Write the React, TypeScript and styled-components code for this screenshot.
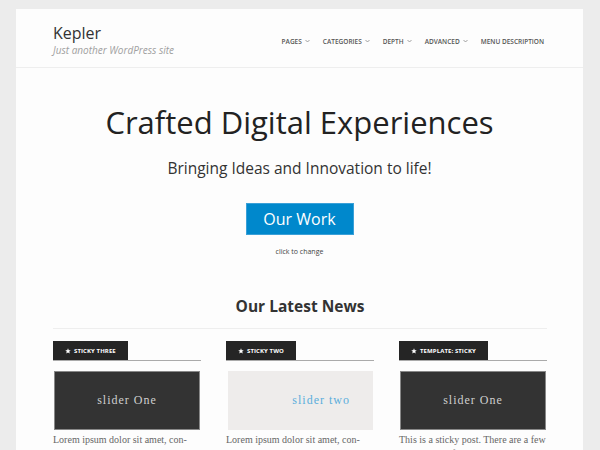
import React from "react";
import styled, { createGlobalStyle } from "styled-components";

const Global = createGlobalStyle`
  html, body { margin: 0; padding: 0; background: #ececec; }
  body { font-family: "Open Sans", sans-serif; }
`;

const Page = styled.div`
  padding: 9px 17px 0 16px;
`;

const Container = styled.div`
  background: #fdfdfd;
  width: 567px;
  min-height: 441px;
`;

const Header = styled.header`
  display: flex;
  justify-content: space-between;
  align-items: center;
  height: 58px;
  padding: 0 39px 0 37px;
  border-bottom: 1px solid #eeeeee;
`;

const Brand = styled.div`
  display: flex;
  flex-direction: column;
  margin-top: 4px;
`;

const SiteTitle = styled.div`
  font-size: 16px;
  color: #333;
  line-height: 20px;
`;

const Tagline = styled.div`
  font-size: 10px;
  font-style: italic;
  color: #a0a0a0;
  line-height: 14px;
`;

const Nav = styled.nav`
  display: flex;
  gap: 13px;
  margin-top: 6px;
`;

const NavItem = styled.span`
  font-size: 6.5px;
  font-weight: 600;
  color: #555;
  text-transform: uppercase;
  display: flex;
  align-items: center;
  gap: 3px;
`;

const Caret = () => (
  <svg width="5" height="4" viewBox="0 0 5 4">
    <path d="M0.5 1 L2.5 3 L4.5 1" fill="none" stroke="#888" strokeWidth="0.8" />
  </svg>
);

const Hero = styled.section`
  display: flex;
  flex-direction: column;
  align-items: center;
  padding-top: 32px;
`;

const HeroTitle = styled.h1`
  margin: 0;
  font-size: 31px;
  font-weight: 400;
  color: #222;
  line-height: 44px;
`;

const HeroSub = styled.p`
  margin: 12px 0 0;
  font-size: 15.5px;
  color: #333;
  line-height: 24px;
`;

const Button = styled.div`
  margin-top: 23px;
  width: 108px;
  height: 32px;
  background: #0088cc;
  border: 1px solid #3aa0d8;
  box-sizing: border-box;
  color: #fff;
  font-size: 16px;
  display: flex;
  align-items: center;
  justify-content: center;
`;

const Small = styled.div`
  margin-top: 12px;
  font-size: 7px;
  color: #444;
`;

const News = styled.section`
  padding: 0 36px 0 37px;
  margin-top: 38px;
`;

const NewsTitle = styled.h2`
  margin: 0;
  text-align: center;
  font-size: 15.5px;
  font-weight: 700;
  color: #333;
  line-height: 24px;
  padding-bottom: 10px;
  border-bottom: 1px solid #eeeeee;
`;

const Grid = styled.div`
  display: grid;
  grid-template-columns: repeat(3, 148px);
  column-gap: 25px;
  margin-top: 12px;
`;

const Card = styled.article`
  display: flex;
  flex-direction: column;
`;

const TagRow = styled.div`
  display: flex;
  border-bottom: 1px solid #aaa;
`;

const Tag = styled.div`
  background: #252525;
  color: #fff;
  font-size: 6px;
  font-weight: 700;
  height: 19px;
  padding: 0 12px;
  display: flex;
  align-items: center;
  gap: 3px;
  text-transform: uppercase;
  letter-spacing: 0.1px;
`;

const Slide = styled.div<{ $light?: boolean }>`
  margin: 10px 1px 0 ${(p) => (p.$light ? "2px" : "1px")};
  height: 57px;
  background: ${(p) => (p.$light ? "#eeeceb" : "#333333")};
  border: 1px solid ${(p) => (p.$light ? "#eeeceb" : "#888")};
  display: flex;
  align-items: center;
  justify-content: ${(p) => (p.$light ? "flex-end" : "center")};
  padding-right: ${(p) => (p.$light ? "22px" : "0")};
  font-family: "Liberation Serif", serif;
  font-size: 12px;
  letter-spacing: 1px;
  color: ${(p) => (p.$light ? "#5aaedc" : "#cfcfcf")};
`;

const Excerpt = styled.p`
  margin: 3px 0 0;
  font-family: "Liberation Serif", serif;
  font-size: 10px;
  line-height: 14px;
  color: #666;
  white-space: pre-line;
`;

const Star = () => (
  <svg width="6" height="6" viewBox="0 0 10 10">
    <path d="M5 0.5 L6.3 3.6 L9.6 3.8 L7.1 6 L7.9 9.3 L5 7.5 L2.1 9.3 L2.9 6 L0.4 3.8 L3.7 3.6 Z" fill="#fff" />
  </svg>
);

const posts = [
  { tag: "Sticky Three", slide: "slider One", light: false, text: "Lorem ipsum dolor sit amet, con-\nsectetur adipiscing elit. Integer dui" },
  { tag: "Sticky Two", slide: "slider two", light: true, text: "Lorem ipsum dolor sit amet, con-\nsectetur adipiscing elit. Integer dui" },
  { tag: "Template: Sticky", slide: "slider One", light: false, text: "This is a sticky post. There are a few\nthings to verify: The sticky post" },
];

export default function App() {
  return (
    <>
      <Global />
      <Page>
        <Container>
          <Header>
            <Brand>
              <SiteTitle>Kepler</SiteTitle>
              <Tagline>Just another WordPress site</Tagline>
            </Brand>
            <Nav>
              <NavItem>Pages <Caret /></NavItem>
              <NavItem>Categories <Caret /></NavItem>
              <NavItem>Depth <Caret /></NavItem>
              <NavItem>Advanced <Caret /></NavItem>
              <NavItem>Menu Description</NavItem>
            </Nav>
          </Header>
          <Hero>
            <HeroTitle>Crafted Digital Experiences</HeroTitle>
            <HeroSub>Bringing Ideas and Innovation to life!</HeroSub>
            <Button>Our Work</Button>
            <Small>click to change</Small>
          </Hero>
          <News>
            <NewsTitle>Our Latest News</NewsTitle>
            <Grid>
              {posts.map((p) => (
                <Card key={p.tag}>
                  <TagRow>
                    <Tag><Star />{p.tag}</Tag>
                  </TagRow>
                  <Slide $light={p.light}>{p.slide}</Slide>
                  <Excerpt>{p.text}</Excerpt>
                </Card>
              ))}
            </Grid>
          </News>
        </Container>
      </Page>
    </>
  );
}
